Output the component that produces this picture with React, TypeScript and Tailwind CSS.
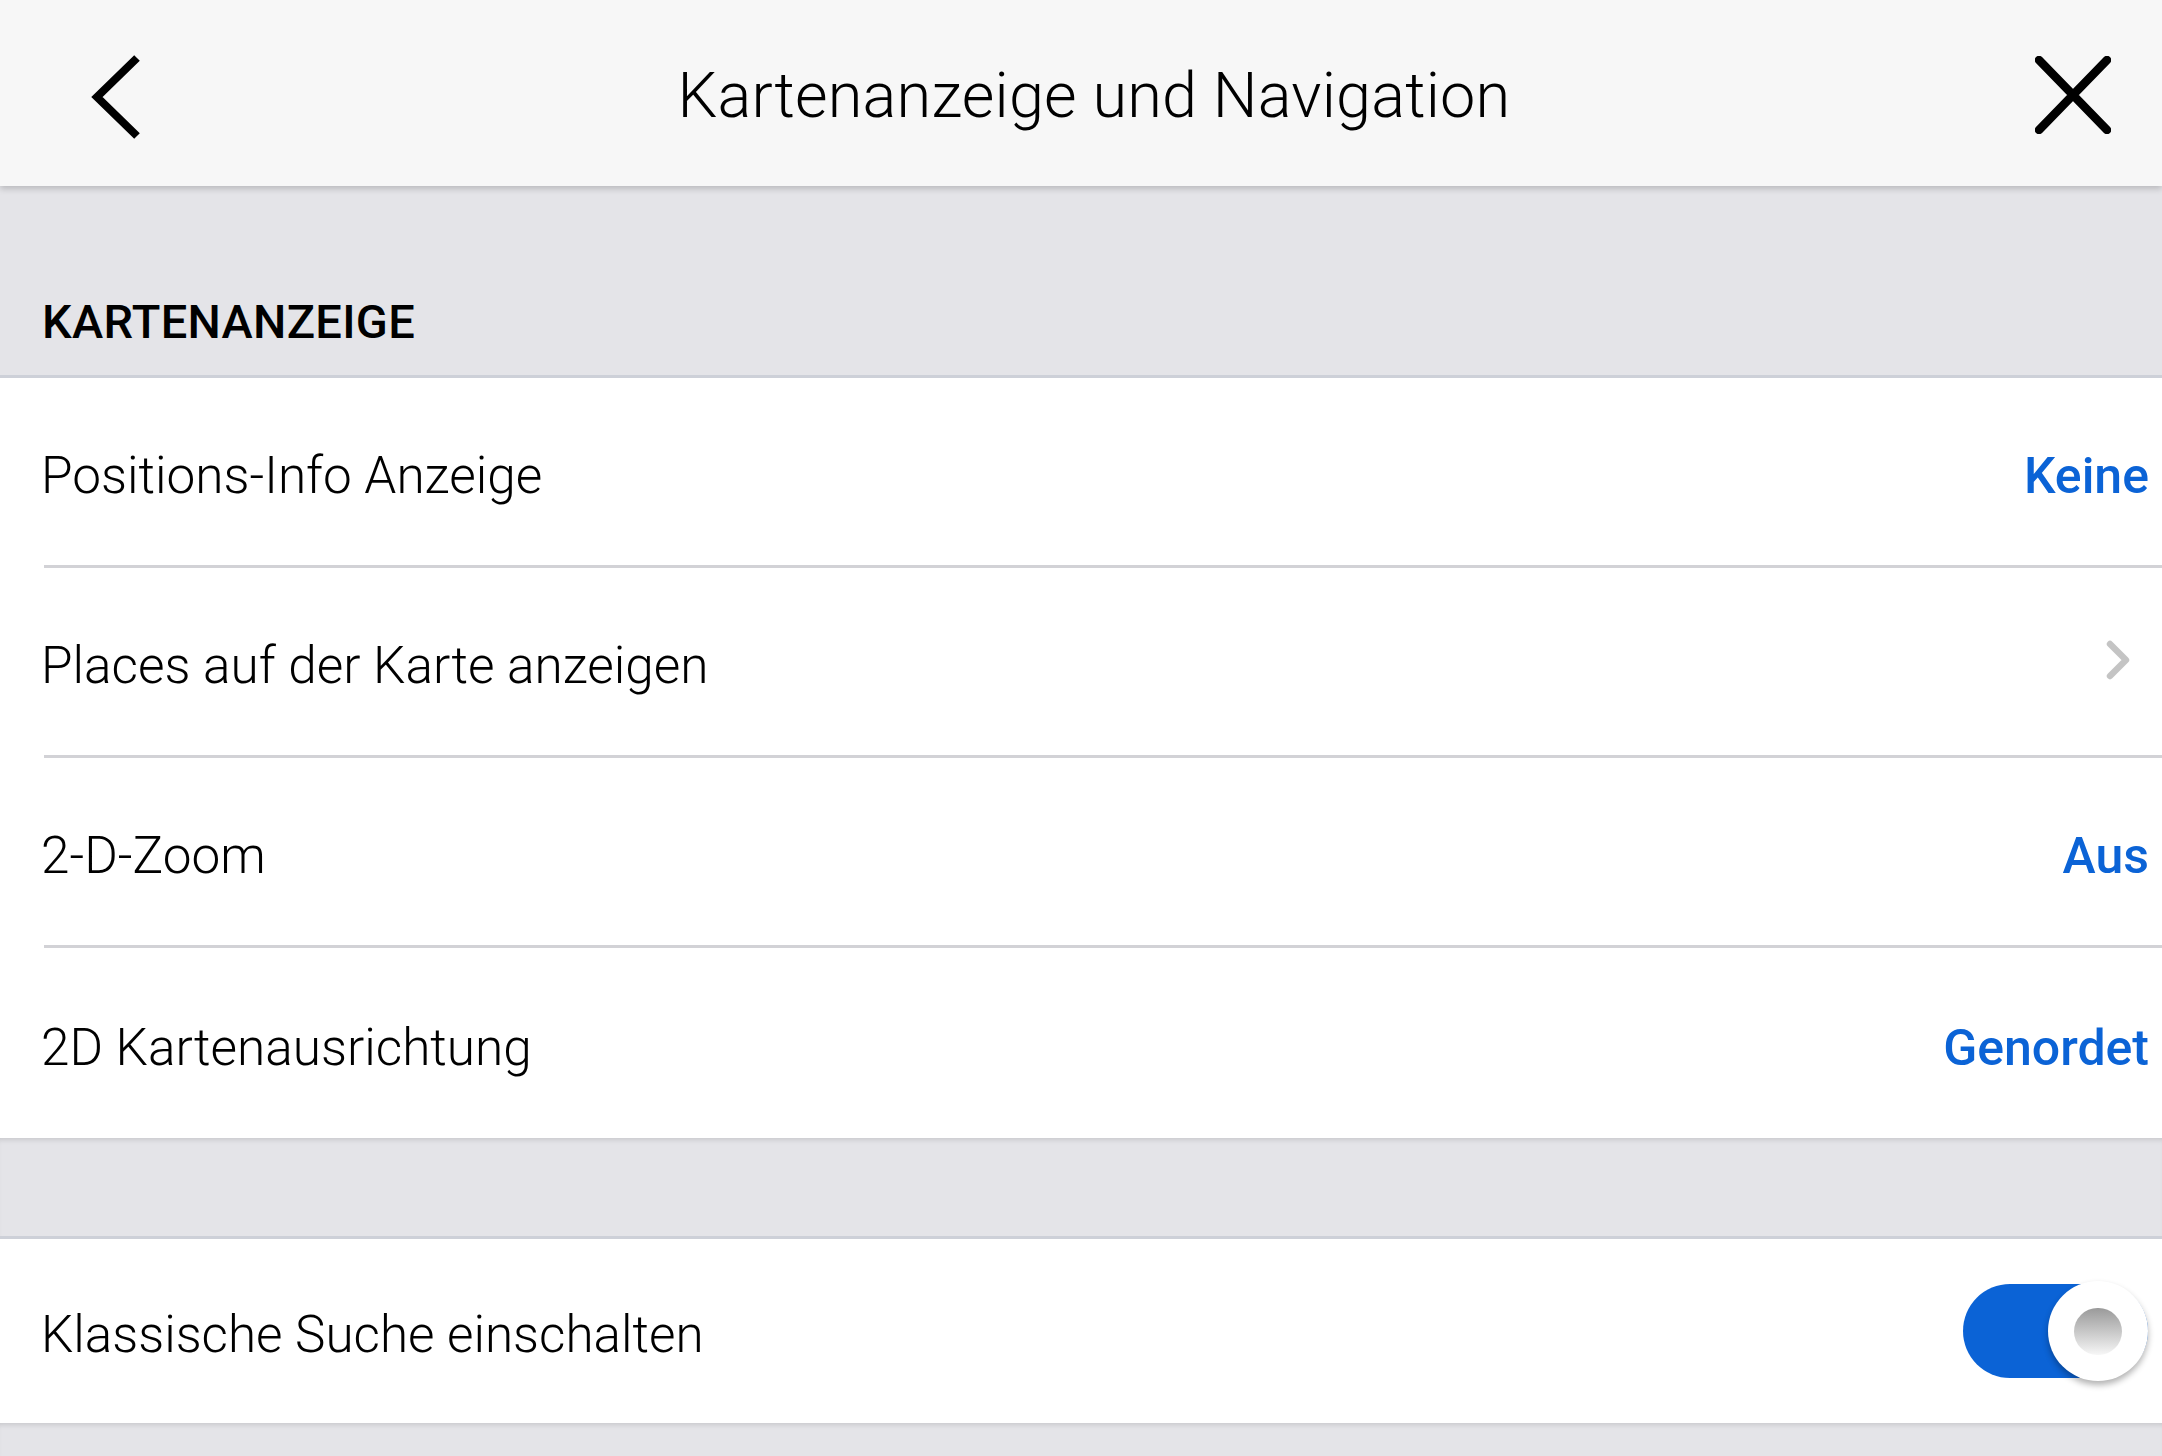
import { ChevronRight } from 'lucide-react';

type Row = { label: string; value?: string; chevron?: boolean };

const rows: Row[] = [
  { label: 'Positions-Info Anzeige', value: 'Keine' },
  { label: 'Places auf der Karte anzeigen', chevron: true },
  { label: '2-D-Zoom', value: 'Aus' },
  { label: '2D Kartenausrichtung', value: 'Genordet' },
];

function Toggle() {
  return (
    <div className="relative h-[94px] w-[185px]">
      <div className="h-full w-full rounded-full bg-[#0b63d6]" />
      <div className="absolute -top-[3px] right-0 flex h-[100px] w-[100px] items-center justify-center rounded-full bg-white shadow-[0_4px_6px_rgba(0,0,0,0.3)]">
        <div className="h-[47px] w-[48px] rounded-full bg-gradient-to-b from-[#9a9a9a] to-[#f7f7f7]" />
      </div>
    </div>
  );
}

export default function App() {
  return (
    <div className="flex h-[1456px] w-full flex-col overflow-hidden bg-[#e4e4e8] font-['Roboto',sans-serif] text-black">
      <header className="relative z-10 flex h-[186px] shrink-0 items-center justify-between bg-[#f7f7f7] pl-[91px] pr-[51px] shadow-[0_3px_6px_rgba(0,0,0,0.18)]">
        <svg width="50" height="84" viewBox="0 0 50 84" className="mt-[8px]">
          <polyline points="46,3 6,42 46,81" fill="none" stroke="black" strokeWidth="8" />
        </svg>
        <h1 className="ml-[12px] mt-[6px] text-[63px] font-light tracking-[0.2px]">Kartenanzeige und Navigation</h1>
        <svg width="76" height="78" viewBox="0 0 76 78" className="mt-[4px]">
          <path d="M4 4 L72 74 M72 4 L4 74" fill="none" stroke="black" strokeWidth="8.5" strokeLinecap="round" />
        </svg>
      </header>

      <div className="flex h-[192px] shrink-0 items-end border-b-[3px] border-[#cdd0d8] px-[42px] pb-[18px]">
        <span className="text-[47px] font-medium tracking-[0.3px]">KARTENANZEIGE</span>
      </div>

      <div className="bg-white">
        {rows.map((r, i) => (
          <div key={r.label} className="pl-[44px]">
            <div
              className={
                'flex h-[190px] items-center justify-between pr-[13px] pt-[10px] ' +
                (i < rows.length - 1 ? 'border-b-[3px] border-[#d2d2d6]' : '')
              }
            >
              <span className="-ml-[3px] text-[51.3px] font-light">{r.label}</span>
              {r.value && <span className="text-[50px] font-medium text-[#0b63d6]">{r.value}</span>}
              {r.chevron && (
                <ChevronRight className="-mr-[1px] -mt-[14px] h-[64px] w-[64px] text-[#c4c4c4]" strokeWidth={2.4} />
              )}
            </div>
          </div>
        ))}
      </div>

      <div className="h-[101px] shrink-0 border-b-[3px] border-[#cdd0d8] shadow-[inset_0_5px_5px_-3px_rgba(0,0,0,0.12)]" />

      <div className="flex h-[184px] shrink-0 items-center justify-between bg-white pl-[41px] pr-[14px]">
        <span className="mt-[8px] text-[51.2px] font-light">Klassische Suche einschalten</span>
        <Toggle />
      </div>

      <div className="flex-1 shadow-[inset_0_5px_5px_-3px_rgba(0,0,0,0.12)]" />
    </div>
  );
}
